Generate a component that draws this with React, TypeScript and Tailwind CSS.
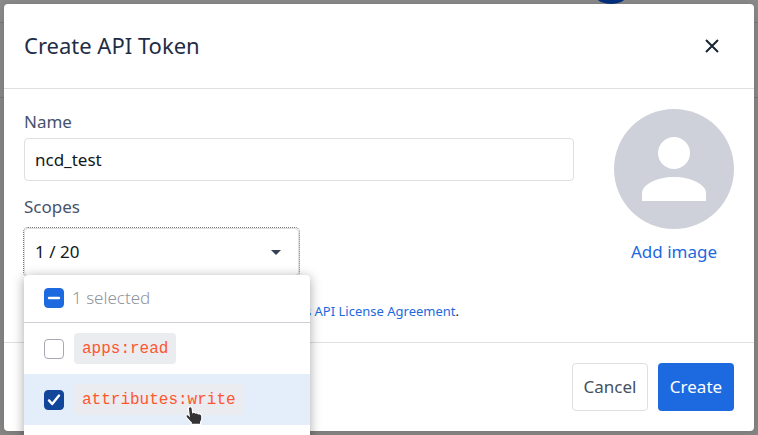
import { useEffect, useRef, useState } from 'react';

const scopes = ['apps:read', 'attributes:write'];
const totalScopes = 20;

function Backdrop() {
  return (
    <div className="absolute inset-0 bg-[#878684]" aria-hidden="true">
      <div className="h-[23px] border-b border-[#777777] bg-[#8b8b8b]" />
      <div className="h-[75px] border-b border-[#777777] bg-[#888888]" />
      <div className="absolute -top-11 left-[587px] size-12 rounded-full bg-[#03307f]" />
    </div>
  );
}

function Avatar() {
  return (
    <svg viewBox="0 0 120 120" className="size-[120px]" aria-hidden="true">
      <circle cx="60" cy="60" r="60" fill="#ced1d9" />
      <circle cx="60" cy="44" r="16" fill="#fff" />
      <path d="M28 92V84C28 76 42 68 60 68S92 76 92 84V92Z" fill="#fff" />
    </svg>
  );
}

function Pointer() {
  return (
    <svg viewBox="0 0 18 20" className="pointer-events-none absolute top-8 left-[161px] h-5 w-[18px]" aria-hidden="true">
      <path
        d="M5.2 .7C6.4 .7 7.1 1.5 7.2 2.7L7.7 6.6C8.6 6 9.9 6.3 10.5 7.1C11.4 6.6 12.7 6.9 13.3 7.8C15.2 7.4 16.8 8.4 16.8 10.2V13C16.8 14.6 15.8 15.2 15.6 16.2V18.4H6.2V16.6C4.8 15.6 3.2 13.2 1.6 11.6C.6 10.5 .7 9.3 1.7 8.8C2.6 8.4 3.5 8.8 4.2 9.6L3.3 2.7C3.2 1.5 4 .7 5.2 .7Z"
        fill="#333"
        stroke="#fff"
        strokeWidth="1.2"
      />
    </svg>
  );
}

type CheckboxProps = {
  id: string;
  checked: boolean;
  indeterminate?: boolean;
  onChange: () => void;
};

function Checkbox({ id, checked, indeterminate = false, onChange }: CheckboxProps) {
  const ref = useRef<HTMLInputElement>(null);

  useEffect(() => {
    if (ref.current) ref.current.indeterminate = indeterminate;
  }, [indeterminate]);

  return (
    <span className="grid size-5 shrink-0">
      <input
        ref={ref}
        id={id}
        type="checkbox"
        checked={checked}
        onChange={onChange}
        className="col-start-1 row-start-1 size-5 appearance-none rounded border border-[#a6a9b2] bg-white checked:border-[#11469b] checked:bg-[#11469b] indeterminate:border-[#1d69e0] indeterminate:bg-[#1d69e0]"
      />
      {(checked || indeterminate) && (
        <svg viewBox="0 0 20 20" className="pointer-events-none col-start-1 row-start-1 size-5" fill="none" stroke="#fff" strokeLinecap="round" strokeLinejoin="round" aria-hidden="true">
          {indeterminate ? <path d="M5 10H15" strokeWidth="2.4" /> : <path d="M5 10.4L8.2 14L15 5.6" strokeWidth="2.4" />}
        </svg>
      )}
    </span>
  );
}

export default function App() {
  const [name, setName] = useState('ncd_test');
  const [open, setOpen] = useState(true);
  const [selected, setSelected] = useState<string[]>(['attributes:write']);

  const toggle = (scope: string) => {
    setSelected(s => (s.includes(scope) ? s.filter(v => v !== scope) : [...s, scope]));
  };

  const allSelected = selected.length === scopes.length;

  return (
    <div className="relative min-h-screen overflow-hidden p-1 font-['Noto_Sans',sans-serif] text-[17px] leading-6 text-[#101820]">
      <Backdrop />

      <div role="dialog" aria-labelledby="dialog-title" className="relative rounded bg-white shadow-[0_0_8px_rgba(0,0,0,0.15)]">
        <header className="flex items-center justify-between border-b border-[#dfdfdf] px-5 py-[26px]">
          <h1 id="dialog-title" className="pb-[2px] text-[22px] leading-[30px] text-[#1f2d45]">Create API Token</h1>
          <button type="button" aria-label="Close" className="mr-[6px] flex size-8 items-center justify-center">
            <svg viewBox="0 0 16 16" className="size-4" fill="none" stroke="#172535" strokeWidth="2" aria-hidden="true">
              <path d="M2 2L14 14M14 2L2 14" />
            </svg>
          </button>
        </header>

        <div className="flex gap-10 px-5 py-5">
          <div className="flex min-w-0 flex-1 flex-col">
            <label htmlFor="name" className="pt-[1px] pb-1 text-[#46536c]">Name</label>
            <input
              id="name"
              value={name}
              onChange={e => setName(e.target.value)}
              className="h-[43px] w-full rounded border border-[#dfdfdf] px-[10px] outline-none"
            />

            <span id="scopes-label" className="pt-[14px] pb-[9px] text-[#46536c]">Scopes</span>
            <div className="relative w-[275px]">
              <button
                type="button"
                aria-haspopup="true"
                aria-expanded={open}
                aria-labelledby="scopes-label scopes-value"
                onClick={() => setOpen(!open)}
                className="flex h-12 w-full items-center justify-between rounded border border-[#dfdfdf] px-[10px] outline-1 outline-dotted outline-[#777777]"
              >
                <span id="scopes-value">{selected.length} / {totalScopes}</span>
                <svg viewBox="0 0 10 5" className="mr-[7px] h-[5px] w-[10px]" fill="#344054" aria-hidden="true">
                  <path d="M0 0H10L5 5Z" />
                </svg>
              </button>

              {open && (
                <div className="absolute top-[47px] left-0 z-10 w-[286px] rounded bg-white pb-12 shadow-[0_2px_12px_rgba(0,0,0,0.35)]">
                  <div className="flex h-12 items-center gap-2 border-b border-[#ced1d9] px-5 pb-[2px]">
                    <Checkbox
                      id="scope-all"
                      checked={allSelected}
                      indeterminate={selected.length > 0 && !allSelected}
                      onChange={() => setSelected(allSelected ? [] : scopes)}
                    />
                    <label htmlFor="scope-all" className="font-light text-[#9095a0]">{selected.length} selected</label>
                  </div>
                  <ul>
                    {scopes.map(scope => (
                      <li key={scope} className="relative flex h-[51px] items-center gap-[10px] px-5 has-checked:bg-[#e4eefa]">
                        <Checkbox id={scope} checked={selected.includes(scope)} onChange={() => toggle(scope)} />
                        <label htmlFor={scope} className="rounded bg-[#ebecf0] px-2 pt-[5px] pb-[3px] font-['Liberation_Mono',monospace] text-base leading-[23px] text-[#ff5630]">
                          {scope}
                        </label>
                        {scope === 'attributes:write' && <Pointer />}
                      </li>
                    ))}
                  </ul>
                </div>
              )}
            </div>

            <p className="w-[435px] pt-[25px] pb-[1px] text-right text-[13px] leading-5">
              <a href="#license" className="text-[#1d69e0]">s API License Agreement</a>.
            </p>
          </div>

          <div className="flex w-[120px] shrink-0 flex-col items-center gap-[11px]">
            <Avatar />
            <button type="button" className="text-[#1d69e0]">Add image</button>
          </div>
        </div>

        <footer className="flex justify-end gap-[10px] border-t border-[#dfdfdf] p-5">
          <button type="button" className="h-12 w-[76px] rounded border border-[#dfdfdf] text-[#465060]">Cancel</button>
          <button type="button" className="h-12 w-[76px] rounded bg-[#1d69e0] text-white">Create</button>
        </footer>
      </div>
    </div>
  );
}
